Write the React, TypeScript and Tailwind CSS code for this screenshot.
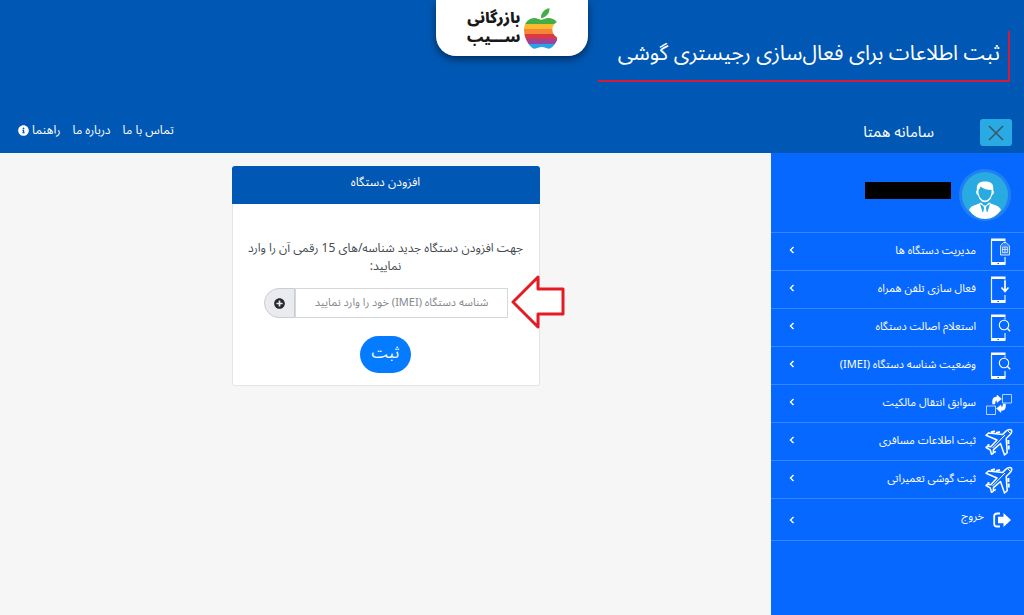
import type { ReactNode } from "react";
import { FaInfoCircle, FaPlusCircle } from "react-icons/fa";

function Phone({ children }: { children?: ReactNode }) {
  return (
    <svg viewBox="0 0 28 28" className="size-7 shrink-0" fill="none" stroke="#fff" aria-hidden="true">
      <path d="M6.500 3v22M20 3.500v2M20 19v6" strokeWidth="1.200" opacity=".9" />
      <path d="M6 .500h14.500v2.500H6zM6 24h14.500v3H6z" fill="#fff" stroke="none" />
      <path d="M12.500 25.500h1.500" stroke="#0668ff" strokeWidth="1.200" />
      {children}
    </svg>
  );
}

const simPhone = (
  <Phone>
    <path d="M15.500 17V7.500L18.500 4.500H21l3.500 3.500v9z" fill="#3c8aff" strokeWidth="1" opacity=".8" />
    <path d="M17.500 9h5v5.500h-5zM20 9v5.500M17.500 11.500h5" strokeWidth=".8" opacity=".8" />
  </Phone>
);

const downloadPhone = (
  <Phone>
    <path d="M20 5v10M16.500 11.500l3.500 4 3.500-4" strokeWidth="1.700" />
  </Phone>
);

const searchPhone = (
  <Phone>
    <circle cx="19" cy="11" r="4.700" strokeWidth="1.100" />
    <path d="M22.300 14.300l2.800 3" strokeWidth="1.500" />
  </Phone>
);

const transfer = (
  <svg viewBox="0 0 28 28" className="size-7 shrink-0" fill="none" stroke="#fff" aria-hidden="true">
    <path d="M17.500 4.500h9v8.500h-9zM1.500 16h9v8.500h-9z" strokeWidth="1" opacity=".7" />
    <path
      d="M7.500 14V11q0-4 4-4H12V5l4.500 4-4.500 3.500v-2q-2 0-2 2V14zM20.500 14v2.500q0 4-4 4H16v2L11.500 18.500 16 15v2q2 0 2-1.500V14z"
      fill="#fff"
      stroke="#fff"
      strokeWidth=".5"
    />
  </svg>
);

const plane = (
  <svg
    viewBox="0 0 28 28"
    className="size-7 shrink-0"
    fill="none"
    stroke="#fff"
    strokeWidth="1.500"
    strokeLinejoin="round"
    aria-hidden="true"
  >
    <path d="M26.500 2.200c-1.700-1.200-4.300-.4-5.800 1.200l-3.200 3.200L3.500 5 1 7.200l11 4.800-6.200 6.700-3.600-.4L1 19.500l4.200 2.300 1.300 4.500 1.700-1 .3-3.700 7-6.100L19.500 27l2.700-2.300-1-14.200 4-4c1.200-1.300 1.900-3 1.300-4.300z" />
    <path d="M22.500 2.500l3.500 3.500M7.500 20L20 7" strokeWidth="1" />
    <path d="M6 4.200l4-1M11 4.900l4-1M23.400 12v4M23.700 17.500v4" strokeWidth="2" />
    <path d="M2.500 17.500l2-1M9.500 25l.8-2" strokeWidth="1.600" />
  </svg>
);

const exit = (
  <svg viewBox="0 0 18 16" className="h-4 w-[18px] shrink-0" fill="none" aria-hidden="true">
    <path d="M7 1.500H4Q1.200 1.500 1.200 4v8q0 2.500 2.800 2.500h3" stroke="#fff" strokeWidth="1.800" />
    <path d="M5 4.800h5.500V1L18 8l-7.500 7v-3.800H5z" fill="#fff" />
  </svg>
);

const menu = [
  { label: "مدیریت دستگاه ها", icon: simPhone },
  { label: "فعال سازی تلفن همراه", icon: downloadPhone },
  { label: "استعلام اصالت دستگاه", icon: searchPhone },
  { label: "وضعیت شناسه دستگاه (IMEI)", icon: searchPhone },
  { label: "سوابق انتقال مالکیت", icon: transfer },
  { label: "ثبت اطلاعات مسافری", icon: plane },
  { label: "ثبت گوشی تعمیراتی", icon: plane },
];

function Chevron() {
  return (
    <svg viewBox="0 0 6 8" className="h-2 w-1.5 shrink-0" fill="none" stroke="#fff" strokeWidth="1.400" aria-hidden="true">
      <path d="M4.500 1L1.500 4l3 3" />
    </svg>
  );
}

function AppleLogo() {
  return (
    <svg viewBox="4 32 366 448" className="h-[41px] w-[33px]" aria-hidden="true">
      <defs>
        <linearGradient id="stripes" gradientUnits="userSpaceOnUse" x1="0" y1="32" x2="0" y2="480">
          <stop offset=".38" stopColor="#45ad45" />
          <stop offset=".38" stopColor="#fbb92d" />
          <stop offset=".51" stopColor="#fbb92d" />
          <stop offset=".51" stopColor="#f6853a" />
          <stop offset=".63" stopColor="#f6853a" />
          <stop offset=".63" stopColor="#dc3a42" />
          <stop offset=".76" stopColor="#dc3a42" />
          <stop offset=".76" stopColor="#9a449f" />
          <stop offset=".88" stopColor="#9a449f" />
          <stop offset=".88" stopColor="#29a5e4" />
        </linearGradient>
      </defs>
      <path
        fill="url(#stripes)"
        d="M318.700 268.700c-.2-36.700 16.400-64.400 50-84.800-18.800-26.900-47.200-41.700-84.700-44.600-35.500-2.800-74.300 20.700-88.500 20.700-15 0-49.400-19.700-76.400-19.700C63.300 141.200 4 184.800 4 273.500q0 39.300 14.400 81.200c12.800 36.700 59 126.700 107.200 125.200 25.200-.6 43-17.900 75.800-17.900 31.800 0 48.300 17.900 76.400 17.900 48.600-.7 90.400-82.500 102.600-119.300-65.200-30.700-61.700-90-61.700-91.900zm-56.600-164.200c27.300-32.400 24.800-61.900 24-72.500-24.100 1.400-52 16.400-67.900 34.900-17.500 19.800-27.800 44.300-25.600 71.900 26.100 2 49.900-11.400 69.500-34.300z"
      />
    </svg>
  );
}

function Avatar() {
  return (
    <svg viewBox="0 0 52 52" className="size-[52px] shrink-0" aria-hidden="true">
      <circle cx="26" cy="26" r="26" fill="#1f80f2" />
      <circle cx="26" cy="26" r="23" fill="#29aae1" />
      <path d="M10 41q1-4 9-6l3-1.500 4 4 4-4 3 1.500q8 2 9 6-6 9-16 9t-16-9z" fill="#fff" />
      <path d="M21 35l2.500 8h5l2.500-8-5 3z" fill="#29aae1" />
      <path d="M24.500 36.500h3l-.5 3 1.500 7h-5l1.500-7z" fill="#fff" />
      <path
        d="M17 22.500q1 0 .8-2C17.500 15 20 12.500 26 12.500s9 2.500 8.200 8q-.2 2 .8 2 0 3-1.800 3.500-1.200 4.500-4.200 6.500-3 1.500-6 0-3-2-4.200-6.500Q17 25.500 17 22.500z"
        fill="#fff"
      />
      <path d="M19.500 21q1.500-1.500 2-3.500 4.500 3.500 11 3.500v3q-.5 4-3.500 6.500-3 2-6 0-3-2.500-3.500-6.500z" fill="#29aae1" />
    </svg>
  );
}

export default function App() {
  return (
    <div dir="rtl" className="flex min-h-screen flex-col bg-[#f6f6f7] font-['Noto_Sans_Arabic','DejaVu_Sans',sans-serif] text-[11px] text-white">
      <div className="grid grid-cols-[1fr_auto_1fr] items-start bg-[#0058b4] pb-[30px]">
        <h1 className="mt-[31px] mr-[14px] ml-[10px] flex h-[51px] items-center border-r-2 border-b-2 border-[#d31b38] pr-2 pb-1 text-[21px] whitespace-nowrap">
          ثبت اطلاعات برای فعال‌سازی رجیستری گوشی
        </h1>
        <div className="col-start-2 flex h-14 w-[152px] items-center justify-center gap-1 rounded-b-[20px] bg-white shadow-[0_3px_8px_rgba(0,0,0,0.5)]">
          <AppleLogo />
          <div className="text-[15px] leading-[19px] font-black text-[#191919]">
            <div>بازرگانی</div>
            <div>ســـیب</div>
          </div>
        </div>
      </div>

      <header className="flex h-[41px] items-center bg-[#0058b4] pr-3 pl-[18px]">
        <button type="button" aria-label="بستن منو" className="flex h-[27px] w-8 items-center justify-center rounded-[3px] bg-[#29aae2]">
          <svg viewBox="0 0 16 16" className="size-4" stroke="#3b5668" strokeWidth="1.500" aria-hidden="true">
            <path d="M1 1l14 14M15 1L1 15" />
          </svg>
        </button>
        <span className="mr-[46px] text-[15px]">سامانه همتا</span>
        <nav className="mr-auto flex items-center gap-3 pb-1 text-[12px]">
          <a href="#contact">تماس با ما</a>
          <a href="#about">درباره ما</a>
          <a href="#help" className="flex items-center gap-[3px]">
            راهنما
            <FaInfoCircle className="size-[11px]" />
          </a>
        </nav>
      </header>

      <div className="flex grow">
        <aside className="w-[253px] shrink-0 bg-[#0668ff]">
          <div className="flex h-20 items-center gap-2 border-b border-[#3488f7] pt-1 pr-[13px]">
            <Avatar />
            <div className="mb-2 h-[17px] w-[86px] bg-black" />
          </div>
          <ul>
            {menu.map((item) => (
              <li key={item.label}>
                <a href="#menu" className="flex h-[38px] items-center gap-[9px] border-b border-[#3488f7] pr-[11px] pl-[18px]">
                  {item.icon}
                  <span className="grow">{item.label}</span>
                  <span className="pb-1">
                    <Chevron />
                  </span>
                </a>
              </li>
            ))}
            <li>
              <a href="#logout" className="flex h-[42px] items-center gap-[9px] border-b border-[#3488f7] pr-[13px] pl-[18px]">
                {exit}
                <span className="grow pb-1">خروج</span>
                <Chevron />
              </a>
            </li>
          </ul>
        </aside>

        <main className="flex grow items-start justify-center pt-[13px]">
          <form className="w-[308px] rounded-[3px] border border-[#e4e4e6] bg-white text-center text-[#444a50]">
            <h2 className="-mx-px -mt-px flex h-[38px] items-center justify-center rounded-t-[3px] bg-[#0058b4] pb-1 text-[12px] text-white">
              افزودن دستگاه
            </h2>
            <div className="px-3 pt-9 pb-3">
              <label htmlFor="imei" className="block text-[12px] leading-[18px]">
                جهت افزودن دستگاه جدید شناسه/های 15 رقمی آن را وارد نمایید:
              </label>
              <div className="relative mx-[19px] mt-3 flex h-[30px]">
                <input
                  id="imei"
                  type="text"
                  placeholder="شناسه دستگاه (IMEI) خود را وارد نمایید"
                  className="min-w-0 grow border border-[#d5d8dc] bg-white px-[18px] text-[11px] placeholder:text-[#858a90]"
                />
                <button
                  type="button"
                  aria-label="افزودن شناسه"
                  className="flex w-[31px] shrink-0 items-center justify-center rounded-l-full border border-[#c9ccd2] bg-[#e9ebef]"
                >
                  <FaPlusCircle className="size-[11px] text-[#25292e]" />
                </button>
                <svg
                  viewBox="0 0 54 54"
                  className="absolute -top-[13px] left-full ml-[3px] size-[54px]"
                  fill="#fff"
                  stroke="#e51b23"
                  strokeWidth="3"
                  strokeLinejoin="round"
                  aria-hidden="true"
                >
                  <path d="M2 27L27 2v12h25v25H27v13z" />
                </svg>
              </div>
              <button type="submit" className="mt-[18px] h-[37px] w-[51px] rounded-full bg-[#057bff] pb-1 text-[16px] text-white">
                ثبت
              </button>
            </div>
          </form>
        </main>
      </div>
    </div>
  );
}
